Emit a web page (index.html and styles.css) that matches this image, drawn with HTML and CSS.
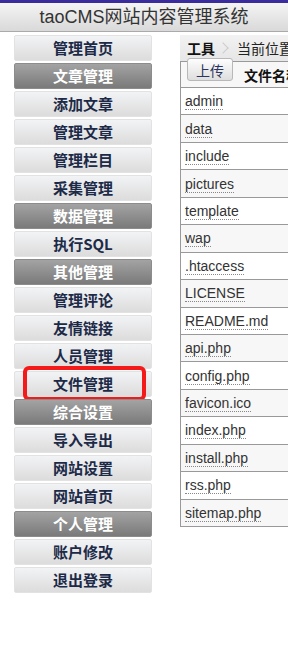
FILE: index.html
```html
<!DOCTYPE html>
<html lang="zh">
<head>
  <meta charset="UTF-8" />
  <title>taoCMS网站内容管理系统</title>
  <link rel="stylesheet" href="styles.css">
</head>
<body>
  <div class="header">taoCMS网站内容管理系统</div>

  <div class="main">
    <div class="menu">
      <a class="item">管理首页</a>
      <a class="item head">文章管理</a>
      <a class="item">添加文章</a>
      <a class="item">管理文章</a>
      <a class="item">管理栏目</a>
      <a class="item">采集管理</a>
      <a class="item head">数据管理</a>
      <a class="item">执行SQL</a>
      <a class="item head">其他管理</a>
      <a class="item">管理评论</a>
      <a class="item">友情链接</a>
      <a class="item">人员管理</a>
      <a class="item current">文件管理</a>
      <a class="item head">综合设置</a>
      <a class="item">导入导出</a>
      <a class="item">网站设置</a>
      <a class="item">网站首页</a>
      <a class="item head">个人管理</a>
      <a class="item">账户修改</a>
      <a class="item">退出登录</a>
    </div>

    <div class="content">
      <div class="toolbar">
        <span class="tool">工具</span>
        <span class="sep"></span>
        <span class="where">当前位置：文件管理</span>
      </div>
      <table class="files">
        <tr class="thead">
          <td><button class="upload">上传</button><b>文件名称</b></td>
        </tr>
        <tr><td><a>admin</a></td></tr>
        <tr><td><a>data</a></td></tr>
        <tr><td><a>include</a></td></tr>
        <tr><td><a>pictures</a></td></tr>
        <tr><td><a>template</a></td></tr>
        <tr><td><a>wap</a></td></tr>
        <tr><td><a>.htaccess</a></td></tr>
        <tr><td><a>LICENSE</a></td></tr>
        <tr><td><a>README.md</a></td></tr>
        <tr><td><a>api.php</a></td></tr>
        <tr><td><a>config.php</a></td></tr>
        <tr><td><a>favicon.ico</a></td></tr>
        <tr><td><a>index.php</a></td></tr>
        <tr><td><a>install.php</a></td></tr>
        <tr><td><a>rss.php</a></td></tr>
        <tr><td><a>sitemap.php</a></td></tr>
      </table>
    </div>
  </div>
</body>
</html>
```

FILE: styles.css
```css
* {
  box-sizing: border-box;
}

body {
  margin: 0;
  padding: 0;
  font-family: "Liberation Sans", "Noto Sans CJK SC", sans-serif;
  font-size: 14px;
  color: #333;
  background: #fff;
  overflow: hidden;
}

.header {
  height: 32px;
  border-top: 3px solid #3b2c9e;
  border-bottom: 1px solid #aaa;
  background: linear-gradient(#f4f4f4, #d9d9d9);
  text-align: center;
  font-size: 18px;
  line-height: 28px;
  color: #333;
}

.main {
  display: flex;
  align-items: flex-start;
  padding-top: 3px;
}

.menu {
  flex: 0 0 138px;
  margin-left: 14px;
  display: flex;
  flex-direction: column;
  gap: 2px;
}

.menu .item {
  height: 26px;
  line-height: 24px;
  text-align: center;
  font-family: "Noto Sans CJK SC", sans-serif;
  font-weight: bold;
  font-size: 15px;
  color: #1c2a48;
  background: linear-gradient(#f2f3f5, #dcdcdc);
  border: 1px solid #e2e2e2;
  border-radius: 2px;
  position: relative;
  white-space: nowrap;
}

.menu .head {
  color: #fff;
  background: linear-gradient(#a3a3a3, #7a7a7a);
  border-color: #8c8c8c;
}

.menu .current::after {
  content: "";
  position: absolute;
  left: 8px;
  right: 5px;
  top: -6px;
  bottom: -5px;
  border: 4px solid #f41a1a;
  border-radius: 6px;
}

.content {
  flex: 0 0 300px;
  margin-left: 28px;
}

.toolbar {
  height: 26px;
  display: flex;
  align-items: center;
  background: linear-gradient(#f2f2f2, #e6e6e6);
  padding-left: 7px;
  white-space: nowrap;
}

.toolbar .tool {
  font-family: "Noto Sans CJK SC", sans-serif;
  font-weight: bold;
  color: #111;
}

.toolbar .sep {
  width: 8px;
  height: 8px;
  border-top: 1px solid #ccc;
  border-right: 1px solid #ccc;
  transform: rotate(45deg);
  margin: 0 10px 0 4px;
}

.toolbar .where {
  font-family: "Noto Sans CJK SC", sans-serif;
  color: #222;
}

.files {
  border-collapse: collapse;
  width: 300px;
  border-left: 1px solid #999;
}

.files td {
  height: 27.45px;
  border-bottom: 1px solid #999;
  padding: 0 0 0 4px;
  white-space: nowrap;
}

.files tr:nth-child(odd) td {
  background: #f7f7f7;
}

.files .thead td {
  border-top: 1px solid #999;
  height: 26px;
  background: linear-gradient(#f4f4f4, #e8e8e8);
  position: relative;
}

.files .thead b {
  font-family: "Noto Sans CJK SC", sans-serif;
  color: #111;
  margin-left: 59px;
}

.upload {
  position: absolute;
  left: 6px;
  top: -4px;
  width: 46px;
  height: 23px;
  border: 1px solid #b8b8b8;
  border-radius: 3px;
  background: linear-gradient(#fdfdfd, #dedede);
  color: #2a3560;
  font-family: "Noto Sans CJK SC", sans-serif;
  font-size: 14px;
  padding: 0;
}

.files a {
  color: #333;
  text-decoration: none;
  border-bottom: 1px dotted #888;
  font-size: 14px;
}
```
